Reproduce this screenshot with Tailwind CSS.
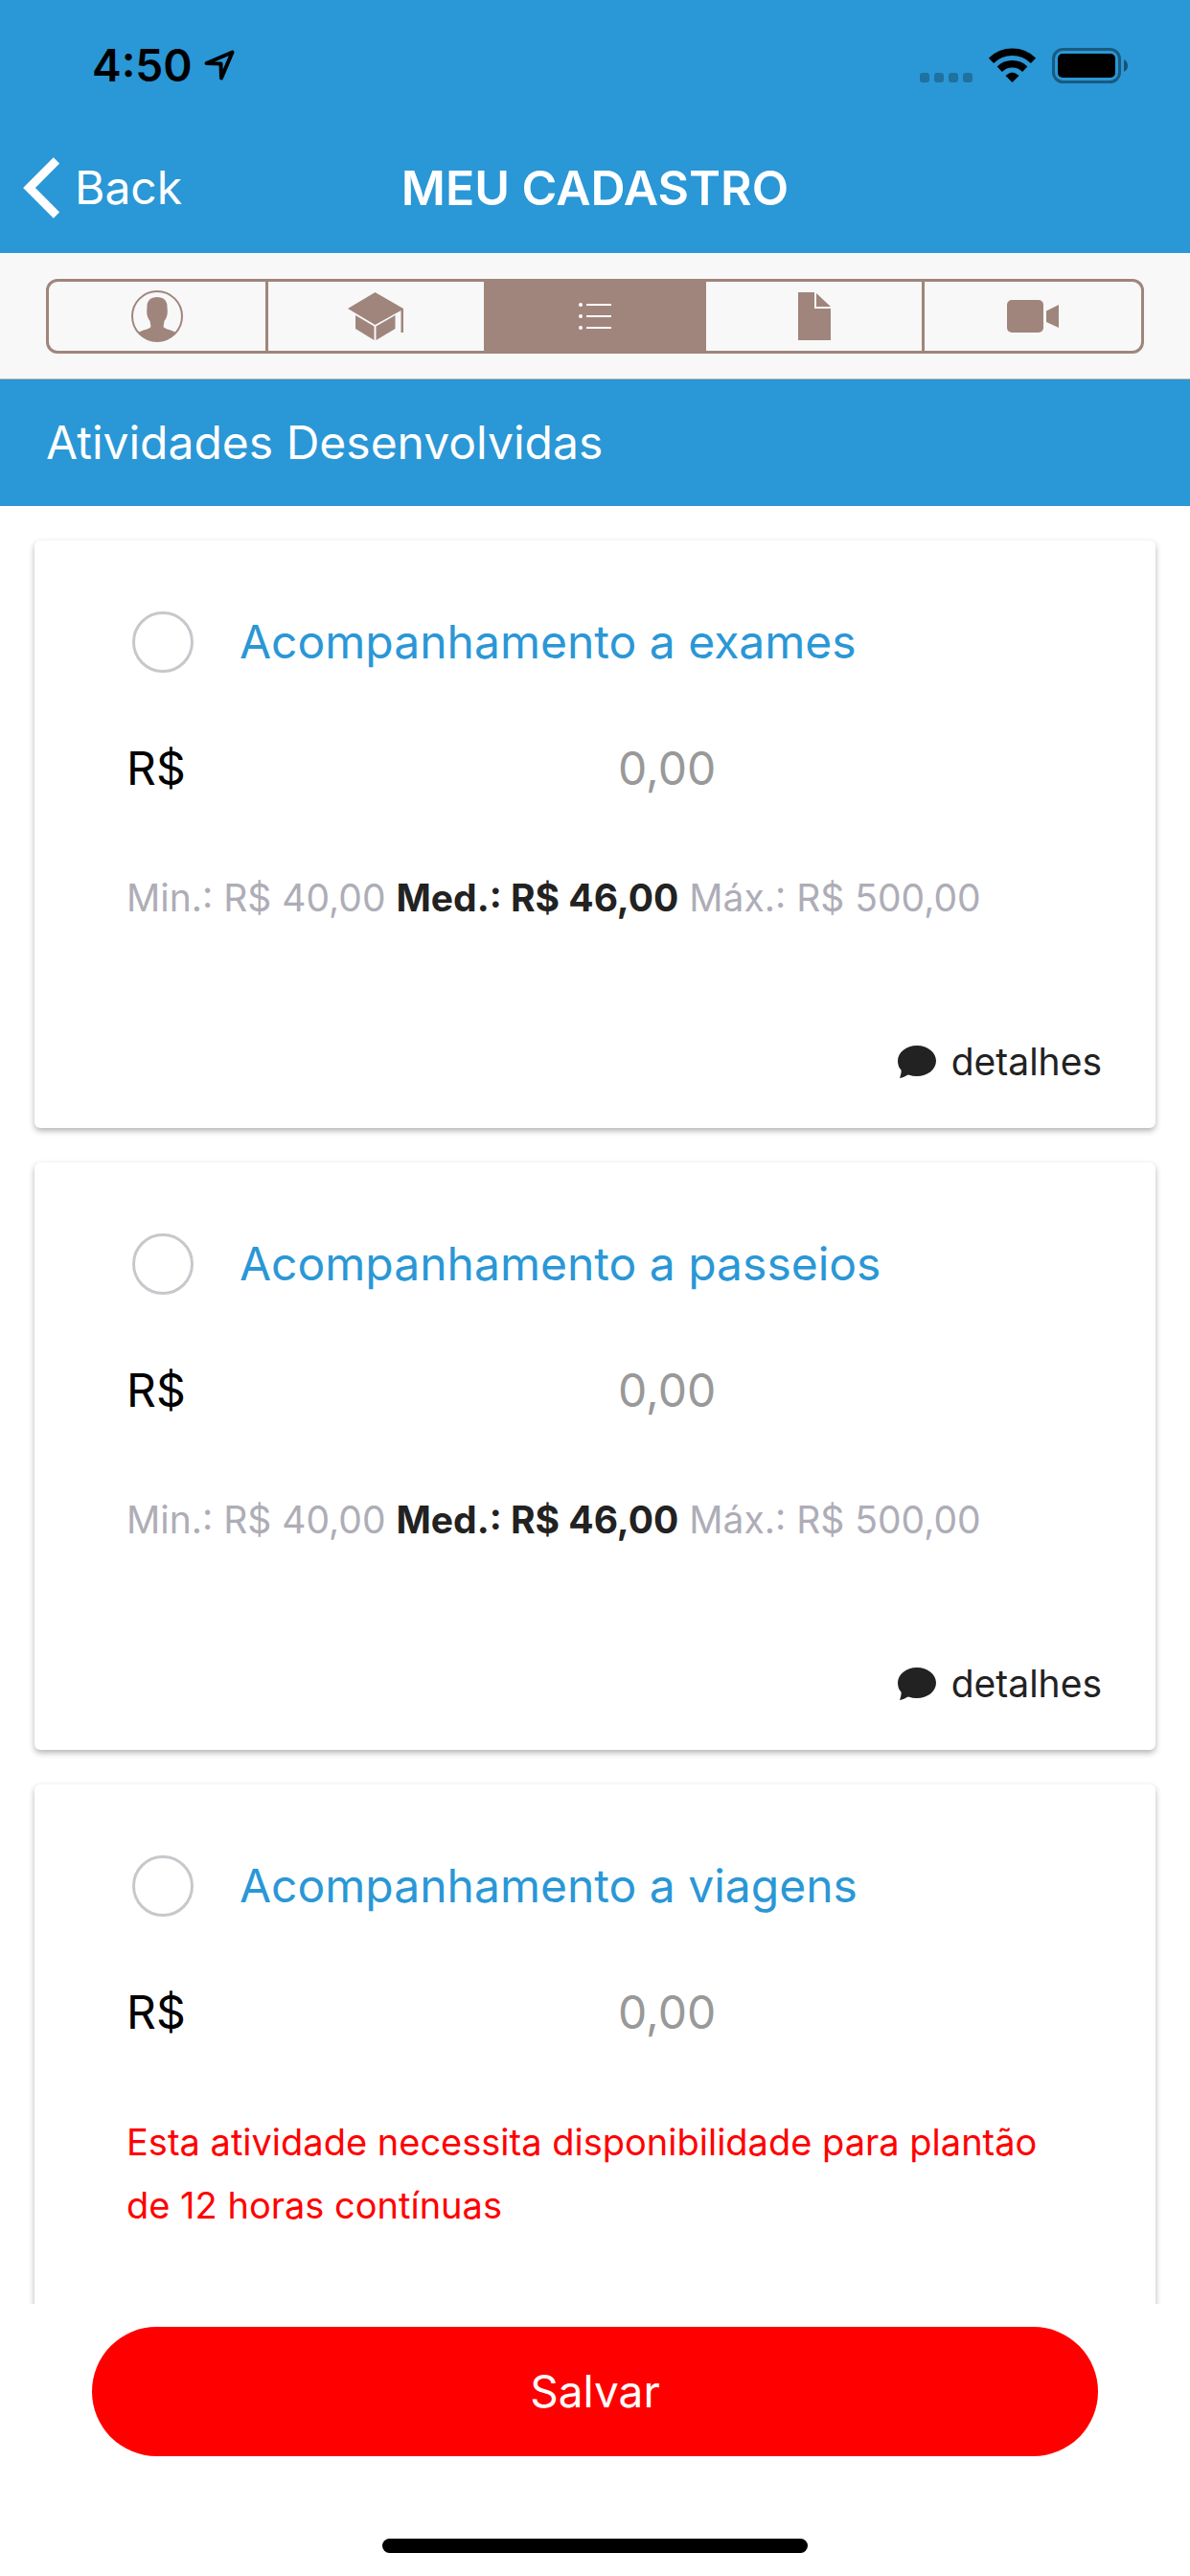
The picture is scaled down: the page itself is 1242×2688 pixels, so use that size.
<!DOCTYPE html>
<html lang="pt-BR">
<head>
  <meta charset="UTF-8" />
  <meta name="viewport" content="width=device-width, initial-scale=1.0" />
  <title>Meu Cadastro</title>
  <script src="https://cdn.jsdelivr.net/npm/@tailwindcss/browser@4"></script>
</head>
<body class="bg-white font-[Inter,sans-serif] text-black">
<div class="h-screen flex flex-col">

  <header class="shrink-0 bg-[#2a97d6]">
    <!-- barra de status -->
    <div class="h-33 pt-1 pl-24 pr-16 flex items-center justify-between">
      <div class="flex items-center gap-3">
        <span class="text-[46px] font-semibold">4:50</span>
        <svg class="w-8 h-8" viewBox="0 0 32 32" fill="none" stroke="black" stroke-width="4" stroke-linejoin="round" stroke-linecap="round"><path d="M2.5 14 29.5 2.5 18 29.5 17.5 14.5Z"/></svg>
      </div>
      <div class="flex items-center">
        <svg class="w-[55px] h-9 mr-[17px]" viewBox="0 0 55 36" fill="black" fill-opacity=".25">
          <rect y="26" width="10" height="10" rx="3"/><rect x="15" y="26" width="10" height="10" rx="3"/><rect x="30" y="26" width="10" height="10" rx="3"/><rect x="45" y="26" width="10" height="10" rx="3"/>
        </svg>
        <svg class="w-[49px] h-9 mr-[17px]" viewBox="0 0 49 36">
          <path d="M2.5 13.2A31.5 31.5 0 0 1 46.5 13.2" fill="none" stroke="black" stroke-width="7.5"/>
          <path d="M11.3 22.2A19 19 0 0 1 37.7 22.2" fill="none" stroke="black" stroke-width="7.5"/>
          <path d="M17.5 29Q24.5 22 31.5 29L24.5 36Z"/>
        </svg>
        <svg class="w-20 h-[37px]" viewBox="0 0 80 37">
          <rect x="1.5" y="1.5" width="69" height="34" rx="10" fill="none" stroke="black" stroke-opacity=".4" stroke-width="3"/>
          <rect x="6" y="6" width="60" height="25" rx="5"/>
          <path d="M75 12Q79 14 79 18.5T75 25Z" fill-opacity=".45"/>
        </svg>
      </div>
    </div>
    <!-- navegação -->
    <div class="h-33 px-6 pb-1 grid grid-cols-[1fr_auto_1fr] items-center text-white">
      <button type="button" class="flex items-center gap-4 justify-self-start">
        <svg class="w-[38px] h-16" viewBox="0 0 38 64" fill="none" stroke="white" stroke-width="9"><path d="M35 3.5 6.5 32 35 60.5"/></svg>
        <span class="text-[48px]">Back</span>
      </button>
      <h1 class="text-[50px] font-semibold">MEU CADASTRO</h1>
    </div>
  </header>

  <!-- abas do cadastro -->
  <nav class="shrink-0 h-33 px-12 flex items-center bg-[#f8f8f8] border-b border-[#b2b2b2]">
    <div class="h-[78px] w-full flex border-3 border-[#a0857c] rounded-xl overflow-hidden divide-x-3 divide-[#a0857c] text-[#a0857c]">
      <button type="button" aria-label="Dados pessoais" class="flex-1 flex items-center justify-center">
        <svg class="w-[54px] h-[54px]" viewBox="0 0 54 54" fill="currentColor"><circle cx="27" cy="27" r="26" fill="none" stroke="currentColor" stroke-width="2"/><path d="M27 7C34 7 38 11 37.5 18C38.5 25 37 29 34.5 32L33.5 38C36 41 42 41 46.5 44A26 26 0 0 1 7.5 44C12 41 18 41 20.5 38L19.5 32C17 29 15.5 25 16.5 18C16 11 20 7 27 7Z"/></svg>
      </button>
      <button type="button" aria-label="Formação" class="flex-1 flex items-center justify-center">
        <svg class="w-[58px] h-[50px]" viewBox="0 0 58 50" fill="currentColor"><path d="M28.5 0 58 17V42H55.5V19L28.5 34 0 17ZM8 24 27.5 35.5V50L8 38ZM49.5 24 29.5 35.5V50L49.5 38Z"/></svg>
      </button>
      <button type="button" aria-label="Atividades" class="flex-1 flex items-center justify-center bg-[#a0857c] text-white">
        <svg class="w-[34px] h-[30px]" viewBox="0 0 34 30" fill="currentColor"><circle cx="2" cy="3" r="2"/><circle cx="2" cy="15" r="2"/><circle cx="2" cy="27" r="2"/><path d="M8 2H34V4H8ZM8 14H34V16H8ZM8 26H34V28H8Z"/></svg>
      </button>
      <button type="button" aria-label="Documentos" class="flex-1 flex items-center justify-center">
        <svg class="w-[34px] h-[50px]" viewBox="0 0 34 50" fill="currentColor"><path d="M0 0H17V17H34V50H0ZM19 1 34 15H19Z"/></svg>
      </button>
      <button type="button" aria-label="Vídeo" class="flex-1 flex items-center justify-center">
        <svg class="w-[54px] h-[34px]" viewBox="0 0 54 34" fill="currentColor"><rect width="38" height="34" rx="5"/><path d="M41 11.5 54 5V29L41 23Z"/></svg>
      </button>
    </div>
  </nav>

  <h2 class="shrink-0 h-33 px-12 flex items-center bg-[#2a97d6] text-white text-[48px]">Atividades Desenvolvidas</h2>

  <!-- lista de atividades -->
  <main class="flex-1 min-h-0 overflow-y-auto [scrollbar-width:none] px-9 py-9 flex flex-col gap-9">

    <section class="shrink-0 pt-10 pb-9 pl-24 pr-12 bg-white rounded-md shadow-[0_3px_6px_rgba(0,0,0,0.3)]">
      <div class="h-33 pl-1.5 flex items-center gap-12">
        <input id="exames" type="checkbox" class="appearance-none shrink-0 size-16 rounded-full border-3 border-[#c8c7cc] checked:bg-[#2a97d6]" />
        <label for="exames" class="text-[48px] text-[#2a97d6]">Acompanhamento a exames</label>
      </div>
      <div class="h-33 grid grid-cols-2 items-center text-[48px]">
        <label for="valor-exames">R$</label>
        <input id="valor-exames" type="text" placeholder="0,00" class="w-full placeholder:text-[#999]" />
      </div>
      <p class="mt-9 text-[39px] leading-[66px] text-[#aeadb7]">Min.: R$ 40,00 <b class="text-[#222]">Med.: R$ 46,00</b> Máx.: R$ 500,00</p>
      <div class="mt-[105px] flex justify-end">
        <button type="button" class="px-2 flex items-center gap-4 text-[39px] leading-[66px] text-[#222]">
          <svg class="w-10 h-9" viewBox="0 0 40 36" fill="currentColor"><path d="M20 1C31 1 40 8 40 17S31 33 20 33C17 33 14 32.5 11 31.5C8 33 5 34.5 2 35C3 32 4 29 3.5 26.5C1 24 0 20.5 0 17C0 8 9 1 20 1Z"/></svg>
          detalhes
        </button>
      </div>
    </section>

    <section class="shrink-0 pt-10 pb-9 pl-24 pr-12 bg-white rounded-md shadow-[0_3px_6px_rgba(0,0,0,0.3)]">
      <div class="h-33 pl-1.5 flex items-center gap-12">
        <input id="passeios" type="checkbox" class="appearance-none shrink-0 size-16 rounded-full border-3 border-[#c8c7cc] checked:bg-[#2a97d6]" />
        <label for="passeios" class="text-[48px] text-[#2a97d6]">Acompanhamento a passeios</label>
      </div>
      <div class="h-33 grid grid-cols-2 items-center text-[48px]">
        <label for="valor-passeios">R$</label>
        <input id="valor-passeios" type="text" placeholder="0,00" class="w-full placeholder:text-[#999]" />
      </div>
      <p class="mt-9 text-[39px] leading-[66px] text-[#aeadb7]">Min.: R$ 40,00 <b class="text-[#222]">Med.: R$ 46,00</b> Máx.: R$ 500,00</p>
      <div class="mt-[105px] flex justify-end">
        <button type="button" class="px-2 flex items-center gap-4 text-[39px] leading-[66px] text-[#222]">
          <svg class="w-10 h-9" viewBox="0 0 40 36" fill="currentColor"><path d="M20 1C31 1 40 8 40 17S31 33 20 33C17 33 14 32.5 11 31.5C8 33 5 34.5 2 35C3 32 4 29 3.5 26.5C1 24 0 20.5 0 17C0 8 9 1 20 1Z"/></svg>
          detalhes
        </button>
      </div>
    </section>

    <!-- esta atividade exige plantão -->
    <section class="shrink-0 pt-10 pb-36 pl-24 pr-12 bg-white rounded-md shadow-[0_3px_6px_rgba(0,0,0,0.3)]">
      <div class="h-33 pl-1.5 flex items-center gap-12">
        <input id="viagens" type="checkbox" class="appearance-none shrink-0 size-16 rounded-full border-3 border-[#c8c7cc] checked:bg-[#2a97d6]" />
        <label for="viagens" class="text-[48px] text-[#2a97d6]">Acompanhamento a viagens</label>
      </div>
      <div class="h-33 grid grid-cols-2 items-center text-[48px]">
        <label for="valor-viagens">R$</label>
        <input id="valor-viagens" type="text" placeholder="0,00" class="w-full placeholder:text-[#999]" />
      </div>
      <p class="mt-9 pr-12 text-[38px] leading-[66px] text-[#f00]">Esta atividade necessita disponibilidade para plantão de 12 horas contínuas</p>
    </section>
  </main>

  <footer class="shrink-0 px-24 py-6 flex flex-col items-center bg-white">
    <button type="submit" class="w-full h-[135px] rounded-full bg-[#f00] text-white text-[46px]">Salvar</button>
    <div class="mt-[86px] w-[444px] h-[15px] rounded-full bg-black"></div>
  </footer>

</div>
</body>
</html>
